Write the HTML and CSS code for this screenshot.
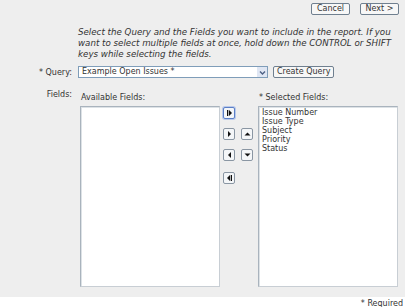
FILE: index.html
```html
<!DOCTYPE html>
<html>
<head>
    <meta charset="UTF-8">
    <title>Report Fields</title>
    <link rel="stylesheet" href="styles.css">
</head>
<body>
<div class="page">
    <div class="toolbar">
        <span class="btn">Cancel</span>
        <span class="btn">Next &gt;</span>
    </div>

    <p class="intro">Select the Query and the Fields you want to include in the report. If you want to select multiple fields at once, hold down the CONTROL or SHIFT keys while selecting the fields.</p>

    <div class="query-row">
        <span class="label">* Query:</span>
        <div class="select">
            <span class="select_text">Example Open Issues *</span>
            <span class="select_arrow">
                <svg width="9" height="9" viewBox="0 0 9 9"><path d="M2 3.5 L4.5 6 L7 3.5" fill="none" stroke="#4d6185" stroke-width="1.4"/></svg>
            </span>
        </div>
        <span class="btn btn_create">Create Query</span>
    </div>

    <div class="fields-row">
        <span class="label label_fields">Fields:</span>
        <div class="col">
            <div class="col_title">Available Fields:</div>
            <div class="listbox"></div>
        </div>
        <div class="movers">
            <span class="mv mv_focus"><svg width="9" height="8" viewBox="0 0 9 8"><rect x="2" y="1" width="1.3" height="6" fill="#111"/><path d="M4 1 L7 4 L4 7 Z" fill="#111"/></svg></span>
            <span></span>
            <span class="mv"><svg width="9" height="8" viewBox="0 0 9 8"><path d="M3 1 L6 4 L3 7 Z" fill="#111"/></svg></span>
            <span class="mv"><svg width="9" height="8" viewBox="0 0 9 8"><path d="M1.5 5.5 L4.5 2.5 L7.5 5.5 Z" fill="#111"/></svg></span>
            <span class="mv"><svg width="9" height="8" viewBox="0 0 9 8"><path d="M6 1 L3 4 L6 7 Z" fill="#111"/></svg></span>
            <span class="mv"><svg width="9" height="8" viewBox="0 0 9 8"><path d="M1.5 2.5 L4.5 5.5 L7.5 2.5 Z" fill="#111"/></svg></span>
            <span class="mv"><svg width="9" height="8" viewBox="0 0 9 8"><path d="M5 1 L2 4 L5 7 Z" fill="#111"/><rect x="5.7" y="1" width="1.3" height="6" fill="#111"/></svg></span>
        </div>
        <div class="col">
            <div class="col_title">* Selected Fields:</div>
            <div class="listbox">
                <div>Issue Number</div>
                <div>Issue Type</div>
                <div>Subject</div>
                <div>Priority</div>
                <div>Status</div>
            </div>
        </div>
    </div>
</div>
<div class="footer">* Required</div>
</body>
</html>
```

FILE: styles.css
```css
body{
    margin: 0;
    font-family: "DejaVu Sans", Verdana, sans-serif;
    font-size: 8px;
    color: #333;
    background: white;
}
.page{
    background: #eeeeee;
    height: 297px;
    overflow: hidden;
}
.toolbar{
    display: flex;
    justify-content: flex-end;
    gap: 10px;
    padding: 3px 6px 0 0;
}
.btn{
    display: inline-block;
    height: 10px;
    line-height: 10px;
    padding: 0 4px;
    border: 1px solid #6f7f8f;
    border-radius: 2px;
    background: #f7f7f7;
    color: #333;
    font-size: 8px;
}
.toolbar .btn{
    width: 29px;
    text-align: center;
}
.intro{
    margin: 12px 0 0 78px;
    width: 318px;
    font-style: italic;
    font-size: 8.7px;
    line-height: 11px;
}
.query-row{
    display: flex;
    align-items: center;
    margin-top: 6px;
}
.label{
    width: 75px;
    text-align: right;
    padding-right: 3px;
    box-sizing: border-box;
    font-size: 8px;
}
.select{
    display: flex;
    align-items: center;
    width: 190px;
    height: 12px;
    box-sizing: border-box;
    border: 1px solid #7f9db9;
    background: white;
    margin-left: 3px;
}
.select_text{
    flex: 1;
    padding-left: 3px;
    line-height: 10px;
}
.select_arrow{
    display: flex;
    align-items: center;
    justify-content: center;
    width: 10px;
    height: 10px;
    background: #dfe6f3;
}
.btn_create{
    margin-left: 5px;
    padding: 0 3px;
}
.fields-row{
    display: flex;
    margin-top: 12px;
}
.col{
    display: flex;
    flex-direction: column;
    margin-left: 5px;
}
.col_title{
    height: 10px;
    line-height: 10px;
    margin: 3px 0 3px 1px;
}
.listbox{
    width: 140px;
    height: 181px;
    box-sizing: border-box;
    border: 1px solid #a9b3bd;
    border-right-color: #c8ced4;
    border-bottom-color: #c8ced4;
    box-shadow: inset 1px 1px 0 #dde2e6;
    background: white;
    padding: 1px 3px;
    line-height: 9px;
}
.movers{
    display: grid;
    grid-template-columns: 12px 12px;
    grid-auto-rows: 12px;
    column-gap: 6px;
    row-gap: 9px;
    align-content: start;
    margin: 17px 0 0 3px;
}
.mv{
    display: flex;
    align-items: center;
    justify-content: center;
    width: 12px;
    height: 12px;
    box-sizing: border-box;
    border: 1px solid #8a96a3;
    border-radius: 2px;
    background: #f4f6f8;
}
.mv_focus{
    border-color: #5b7fc7;
    box-shadow: 0 0 0 1px #b9c9ea;
}
.movers .mv:last-child{
    grid-column: 1;
    margin-top: 2px;
}
.footer{
    text-align: right;
    padding: 2px 2px 0 0;
    color: #333;
}
```
